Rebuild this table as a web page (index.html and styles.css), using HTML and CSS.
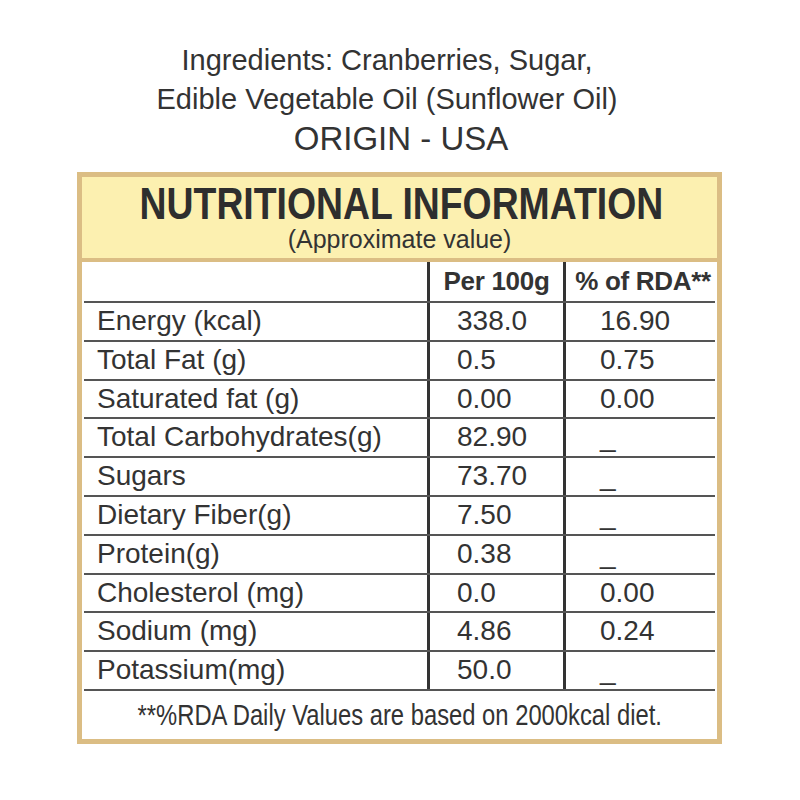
FILE: index.html
```html
<!DOCTYPE html>
<html>
<head>
<meta charset="utf-8">
<link rel="stylesheet" href="styles.css">
</head>
<body>
<div class="page">
  <div class="ingredients">
    <div>Ingredients: Cranberries, Sugar,</div>
    <div>Edible Vegetable Oil (Sunflower Oil)</div>
  </div>
  <div class="origin">ORIGIN - USA</div>
  <div class="box">
    <div class="header">
      <div class="title"><span class="narrow">NUTRITIONAL INFORMATION</span></div>
      <div class="subtitle">(Approximate value)</div>
    </div>
    <div class="table">
      <div class="row head">
        <div class="c1"></div>
        <div class="c2">Per 100g</div>
        <div class="c3">% of RDA**</div>
      </div>
      <div class="row"><div class="c1">Energy (kcal)</div><div class="c2">338.0</div><div class="c3">16.90</div></div>
      <div class="row"><div class="c1">Total Fat (g)</div><div class="c2">0.5</div><div class="c3">0.75</div></div>
      <div class="row"><div class="c1">Saturated fat (g)</div><div class="c2">0.00</div><div class="c3">0.00</div></div>
      <div class="row"><div class="c1">Total Carbohydrates(g)</div><div class="c2">82.90</div><div class="c3">_</div></div>
      <div class="row"><div class="c1">Sugars</div><div class="c2">73.70</div><div class="c3">_</div></div>
      <div class="row"><div class="c1">Dietary Fiber(g)</div><div class="c2">7.50</div><div class="c3">_</div></div>
      <div class="row"><div class="c1">Protein(g)</div><div class="c2">0.38</div><div class="c3">_</div></div>
      <div class="row"><div class="c1">Cholesterol (mg)</div><div class="c2">0.0</div><div class="c3">0.00</div></div>
      <div class="row"><div class="c1">Sodium (mg)</div><div class="c2">4.86</div><div class="c3">0.24</div></div>
      <div class="row"><div class="c1">Potassium(mg)</div><div class="c2">50.0</div><div class="c3">_</div></div>
    </div>
    <div class="footer"><span class="narrow-f">**%RDA Daily Values are based on 2000kcal diet.</span></div>
  </div>
</div>
</body>
</html>
```

FILE: styles.css
```css
* { box-sizing: border-box; }
html, body { margin: 0; padding: 0; background: #ffffff; }
body {
  font-family: "Liberation Sans", Arial, sans-serif;
  color: #333333;
}
.page {
  width: 800px;
  height: 800px;
  padding-top: 41px;
}
.ingredients {
  text-align: center;
  font-size: 29px;
  line-height: 39px;
  padding-right: 26px;
}
.origin {
  text-align: center;
  font-size: 33px;
  line-height: 40px;
  padding-left: 2px;
}
.box {
  margin: 13px 0 0 77px;
  width: 645px;
  border: 5px solid #dbbd84;
  background: #ffffff;
}
.header {
  background: #fcf0b0;
  border-bottom: 4px solid #dbbd84;
  padding: 6px 0 5px;
  height: 85px;
}
.title {
  display: flex;
  justify-content: center;
  height: 42px;
  padding-left: 3px;
}
.narrow {
  display: inline-block;
  white-space: nowrap;
  font-weight: bold;
  font-size: 45px;
  line-height: 42px;
  color: #2e2e2e;
  transform: scaleX(0.83);
}
.subtitle {
  text-align: center;
  font-size: 25px;
  line-height: 28px;
}
.table {
  margin: 0 2px;
}
.row {
  display: grid;
  grid-template-columns: 343px 136px 153px;
  height: 38.8px;
  border-bottom: 2px solid #555555;
  font-size: 28px;
  line-height: 36.8px;
}
.row.head {
  height: 41px;
  line-height: 39px;
  font-weight: bold;
  font-size: 26px;
  letter-spacing: -0.3px;
}
.c1 { padding-left: 13px; white-space: nowrap; }
.c2 { border-left: 3px solid #333333; padding-left: 27px; white-space: nowrap; }
.c3 { border-left: 3px solid #333333; padding-left: 34px; white-space: nowrap; }
.head .c2, .head .c3 { padding-left: 0; text-align: center; }
.head .c3 { padding-left: 4px; }
.footer {
  display: flex;
  justify-content: center;
  height: 48px;
}
.narrow-f {
  display: inline-block;
  white-space: nowrap;
  font-size: 29px;
  line-height: 48px;
  transform: scaleX(0.82);
}
```
